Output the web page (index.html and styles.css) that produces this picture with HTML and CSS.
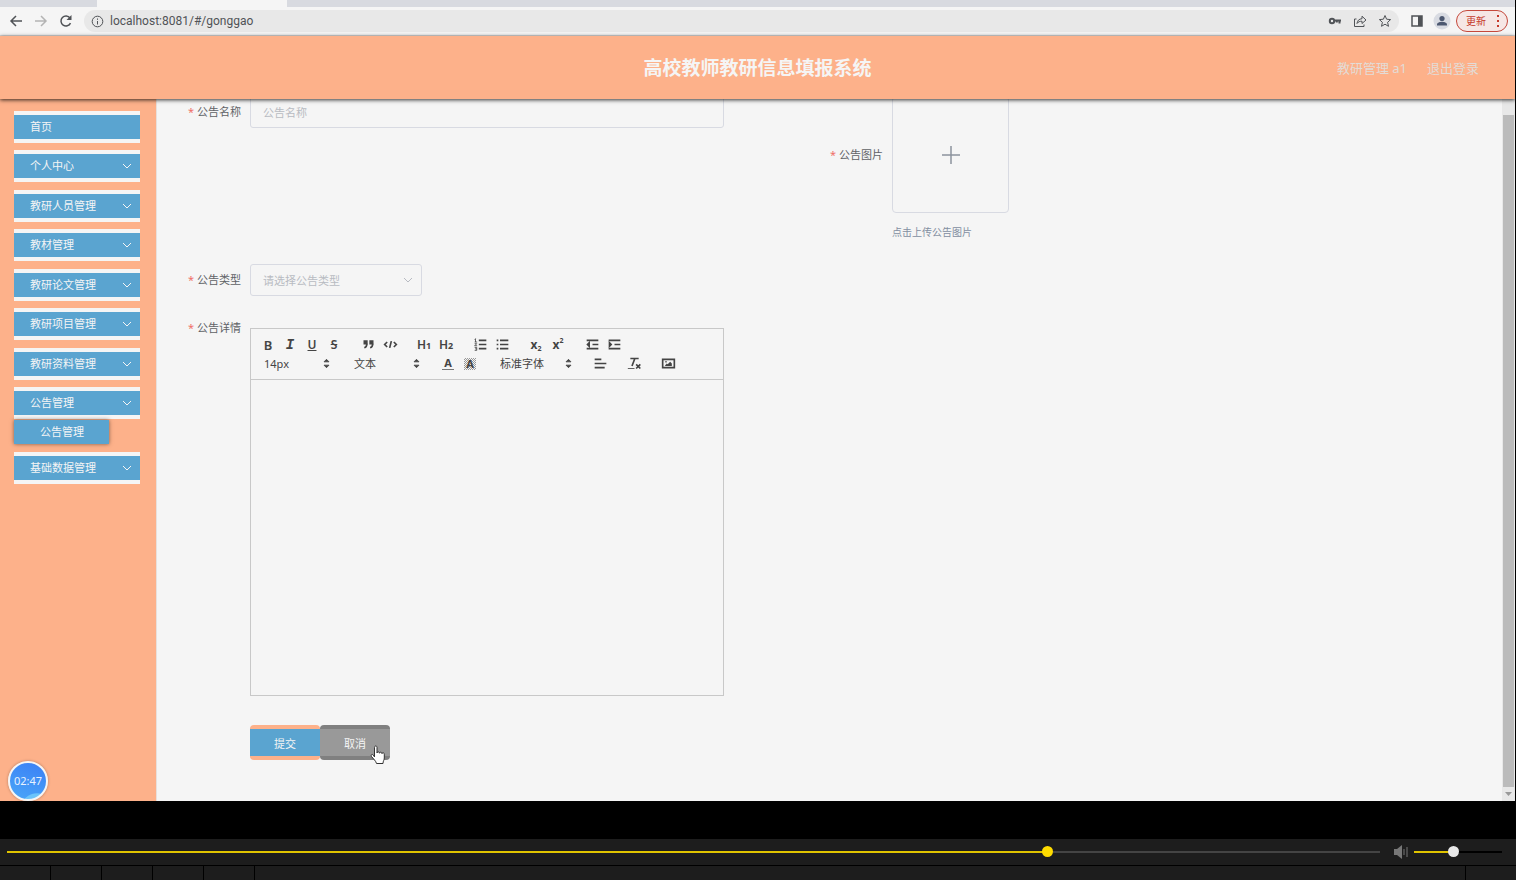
FILE: index.html
```html
<!DOCTYPE html>
<html lang="zh-CN">
<head>
    <meta charset="UTF-8">
    <meta name="viewport" content="width=device-width, initial-scale=1.0">
    <title>高校教师教研信息填报系统</title>
    <link rel="stylesheet" href="styles.css">
</head>
<body>
<div class="screen">
    <div class="tabs">
        <div class="tab"></div>
    </div>
    <div class="toolbar">
        <button class="tool" aria-label="后退"><svg width="14" height="14" viewBox="0 0 14 14"><path d="M13 7H2M7 2L2 7l5 5"/></svg></button>
        <button class="tool off" aria-label="前进"><svg width="14" height="14" viewBox="0 0 14 14"><path d="M1 7h11M7 2l5 5-5 5"/></svg></button>
        <button class="tool" aria-label="刷新"><svg width="14" height="14" viewBox="0 0 14 14"><path d="M11.5 9.2A5 5 0 1 1 11 4"/><path class="fill" d="M12.5 1v5h-5z"/></svg></button>
        <div class="address">
            <svg width="13" height="13" viewBox="0 0 13 13"><circle cx="6.5" cy="6.5" r="5.3"/><path d="M6.5 6v3.5M6.5 3.5v1.3"/></svg>
            <input type="text" class="url" value="localhost:8081/#/gonggao" aria-label="地址">
            <button class="tool" aria-label="密码"><svg width="14" height="14" viewBox="0 0 14 14"><circle class="thick" cx="4" cy="7" r="2.2"/><path class="thick" d="M6.5 6.5H13M11.5 6.5v3M8.8 6.5v2"/></svg></button>
            <button class="tool thin" aria-label="分享"><svg width="14" height="14" viewBox="0 0 14 14"><path d="M3.5 5H1.5v7.5h9.5V10.5"/><path d="M4 9.5c.4-3 2-4.6 5-4.8V2.2L13 6 9 9.5V7.2c-2.3 0-3.8.6-5 2.3z"/></svg></button>
            <button class="tool thin" aria-label="收藏"><svg width="14" height="14" viewBox="0 0 14 14"><path d="M7 1.5l1.6 3.7 4 .4-3 2.7.9 4L7 10.2l-3.5 2.1.9-4-3-2.7 4-.4z"/></svg></button>
        </div>
        <button class="tool" aria-label="侧边栏"><svg width="14" height="14" viewBox="0 0 14 14"><path d="M2 2h10v10H2z"/><path class="fill" d="M8 2h4v10H8z"/></svg></button>
        <button class="tool" aria-label="用户"><svg width="18" height="18" viewBox="0 0 18 18"><circle class="halo" cx="9" cy="9" r="8.5"/><circle class="person" cx="9" cy="6.5" r="2.6"/><path class="person" d="M4 13.5v-1c0-2 3.3-2.8 5-2.8s5 .8 5 2.8v1z"/></svg></button>
        <button class="update">更新<svg width="4" height="14" viewBox="0 0 4 14"><path d="M1 1h2v2H1zM1 6h2v2H1zM1 11h2v2H1z"/></svg></button>
    </div>

    <header class="header">
        <h1>高校教师教研信息填报系统</h1>
        <nav class="user">
            <a href="#">教研管理 a1</a>
            <a href="#">退出登录</a>
        </nav>
    </header>

    <div class="page">
        <aside class="side">
            <ul class="menu">
                <li><a href="#">首页</a></li>
                <li><a href="#">个人中心<svg width="10" height="6" viewBox="0 0 10 6"><path d="M1 1l4 4 4-4"/></svg></a></li>
                <li><a href="#">教研人员管理<svg width="10" height="6" viewBox="0 0 10 6"><path d="M1 1l4 4 4-4"/></svg></a></li>
                <li><a href="#">教材管理<svg width="10" height="6" viewBox="0 0 10 6"><path d="M1 1l4 4 4-4"/></svg></a></li>
                <li><a href="#">教研论文管理<svg width="10" height="6" viewBox="0 0 10 6"><path d="M1 1l4 4 4-4"/></svg></a></li>
                <li><a href="#">教研项目管理<svg width="10" height="6" viewBox="0 0 10 6"><path d="M1 1l4 4 4-4"/></svg></a></li>
                <li><a href="#">教研资料管理<svg width="10" height="6" viewBox="0 0 10 6"><path d="M1 1l4 4 4-4"/></svg></a></li>
                <li>
                    <a href="#">公告管理<svg width="10" height="6" viewBox="0 0 10 6"><path d="M1 1l4 4 4-4"/></svg></a>
                    <a href="#" class="sub">公告管理</a>
                </li>
                <li><a href="#">基础数据管理<svg width="10" height="6" viewBox="0 0 10 6"><path d="M1 1l4 4 4-4"/></svg></a></li>
            </ul>
            <div class="timer">02:47</div>
        </aside>

        <main class="main">
            <form class="form">
                <div class="row">
                    <div class="item">
                        <label for="name">公告名称</label>
                        <div class="field"><input type="text" id="name" class="wide" placeholder="公告名称"></div>
                    </div>
                    <div class="item">
                        <label for="photo" class="tall">公告图片</label>
                        <div class="field">
                            <button type="button" id="photo" class="upload"><svg width="20" height="20" viewBox="0 0 20 20"><path d="M10 1v18M1 10h18"/></svg></button>
                            <div class="tip">点击上传公告图片</div>
                        </div>
                    </div>
                </div>
                <div class="row">
                    <div class="item">
                        <label for="type">公告类型</label>
                        <div class="field type">
                            <select id="type"><option>请选择公告类型</option></select>
                            <svg width="10" height="6" viewBox="0 0 10 6"><path d="M1 1l4 4 4-4"/></svg>
                        </div>
                    </div>
                </div>
                <div class="row">
                    <div class="item">
                        <label for="text">公告详情</label>
                        <div class="field">
                            <div class="editor">
                                <div class="tools">
                                    <div class="line">
                                        <div class="group">
                                            <button type="button"><b>B</b></button>
                                            <button type="button"><i>I</i></button>
                                            <button type="button"><u>U</u></button>
                                            <button type="button"><s>S</s></button>
                                        </div>
                                        <div class="group">
                                            <button type="button" aria-label="引用"><svg viewBox="0 0 18 18"><path class="fill" d="M4 5h3v3H4zM11 5h3v3h-3z"/><path d="M7 8c0 4-3 5-3 5M14 8c0 4-3 5-3 5"/></svg></button>
                                            <button type="button" aria-label="代码"><svg viewBox="0 0 18 18"><path d="M5 6L2 9l3 3M13 6l3 3-3 3M10 5L8 13"/></svg></button>
                                        </div>
                                        <div class="group">
                                            <button type="button" class="head">H<small>1</small></button>
                                            <button type="button" class="head">H<small>2</small></button>
                                        </div>
                                        <div class="group">
                                            <button type="button" aria-label="有序列表"><svg viewBox="0 0 18 18"><path d="M7 4h9M7 9h9M7 14h9"/><path class="fine" d="M2 3l1-1v4M2 6h3M2 8h2.5L2 10.5h3M2 12.5h2.5v3.5H2M2.5 14.2h2"/></svg></button>
                                            <button type="button" aria-label="无序列表"><svg viewBox="0 0 18 18"><path d="M6 4h10M6 9h10M6 14h10M2 4h2M2 9h2M2 14h2"/></svg></button>
                                        </div>
                                        <div class="group">
                                            <button type="button" class="script">x<sub>2</sub></button>
                                            <button type="button" class="script">x<sup>2</sup></button>
                                        </div>
                                        <div class="group">
                                            <button type="button" aria-label="减少缩进"><svg viewBox="0 0 18 18"><path d="M2 14h14M2 4h14M9 9h7"/><path class="fill" d="M5 7v4L3 9z"/></svg></button>
                                            <button type="button" aria-label="增加缩进"><svg viewBox="0 0 18 18"><path d="M2 14h14M2 4h14M9 9h7"/><path class="fill" d="M3 7v4l2-2z"/></svg></button>
                                        </div>
                                    </div>
                                    <div class="line">
                                        <div class="group picker">
                                            <select aria-label="字号"><option>14px</option></select>
                                            <svg viewBox="0 0 18 18"><path class="fill" d="M6 7l3-3 3 3zM6 11l3 3 3-3z"/></svg>
                                        </div>
                                        <div class="group picker">
                                            <select aria-label="标题"><option>文本</option></select>
                                            <svg viewBox="0 0 18 18"><path class="fill" d="M6 7l3-3 3 3zM6 11l3 3 3-3z"/></svg>
                                        </div>
                                        <div class="group">
                                            <button type="button"><span class="color">A</span></button>
                                            <button type="button"><span class="back">A</span></button>
                                        </div>
                                        <div class="group picker font">
                                            <select aria-label="字体"><option>标准字体</option></select>
                                            <svg viewBox="0 0 18 18"><path class="fill" d="M6 7l3-3 3 3zM6 11l3 3 3-3z"/></svg>
                                        </div>
                                        <div class="group">
                                            <button type="button" aria-label="对齐"><svg viewBox="0 0 18 18"><path d="M2 9h14M2 14h12M2 4h8"/></svg></button>
                                        </div>
                                        <div class="group">
                                            <button type="button" aria-label="清除格式"><svg viewBox="0 0 18 18"><path d="M4 3h10M6 12l3.4-9M11 10l5 5M16 10l-5 5"/><path class="fine" d="M1 15h8"/></svg></button>
                                        </div>
                                        <div class="group">
                                            <button type="button" aria-label="图片"><svg viewBox="0 0 18 18"><path d="M2 4h14v10H2z"/><circle class="dot" cx="6" cy="7" r="1"/><path class="dot" d="M5 12v-1l2-2 1 1 3-3 2 2v3z"/></svg></button>
                                        </div>
                                    </div>
                                </div>
                                <textarea id="text"></textarea>
                            </div>
                        </div>
                    </div>
                </div>
                <div class="buttons">
                    <button type="button" class="submit">提交</button>
                    <button type="button" class="cancel">取消</button>
                    <svg class="hand" width="16" height="20" viewBox="0 0 16 20"><path d="M4.5 12V2.5c0-2 2.5-2 2.5 0V8c0-1.5 2.5-1.5 2.5.2 0-1.4 2.5-1.3 2.5.4 0-1.3 2.3-1.2 2.3.6V13c0 2-1.3 3-1.3 5.5H6.5C6 16 3 13.5 1.5 11.5c-1-1.6.6-2.7 1.8-1.5z"/></svg>
                </div>
            </form>
        </main>
        <div class="scroll">
            <div class="thumb"></div>
            <svg width="7" height="4" viewBox="0 0 7 4"><path d="M0 0h7L3.5 4z"/></svg>
        </div>
    </div>

    <div class="player">
        <input type="range" class="seek" min="0" max="100" value="76" style="--pos: 76%" aria-label="进度">
        <svg width="16" height="14" viewBox="0 0 16 14"><path class="horn" d="M1 4h3l5-4v14l-5-4H1z"/><path d="M11 4v6M14 2v10"/></svg>
        <input type="range" class="volume" min="0" max="100" value="44" style="--pos: 44%" aria-label="音量">
    </div>
    <div class="cells">
        <div></div>
        <div></div>
        <div></div>
        <div></div>
        <div></div>
        <div class="rest"></div>
        <div></div>
    </div>
</div>
</body>
</html>
```
FILE: styles.css
```css
*{
    box-sizing: border-box;
}
body{
    margin: 0;
    background: #000;
    color: #606266;
    font-family: "Noto Sans", "Noto Sans CJK SC", sans-serif;
    font-size: 11px;
}
button, input, select, textarea{
    margin: 0;
    padding: 0;
    border: none;
    outline: none;
    background: none;
    color: inherit;
    font: inherit;
}
select{
    appearance: none;
}
svg{
    flex: none;
    fill: none;
    stroke: currentColor;
}
a{
    color: inherit;
    text-decoration: none;
}
.screen{
    display: flex;
    flex-direction: column;
    height: 100vh;
    overflow: hidden;
}

/* browser bar */
.tabs{
    flex: none;
    height: 7px;
    padding-left: 97px;
    margin-right: 1px;
    background: #d8dae0;
}
.tab{
    width: 190px;
    height: 7px;
    background: #f5f5f5;
}
.toolbar{
    flex: none;
    display: flex;
    align-items: center;
    height: 29px;
    padding: 0 7px 0 3px;
    margin-right: 1px;
    background: #f5f5f5;
    border-bottom: 1px solid #ddd;
    color: #505357;
}
.tool{
    display: flex;
    align-items: center;
    justify-content: center;
    width: 25px;
    height: 22px;
}
.tool svg{
    stroke-width: 1.5;
}
.thin svg{
    stroke-width: 1;
}
.off{
    color: #b4b4b4;
}
.tool .fill{
    fill: currentColor;
    stroke: none;
}
.tool .thick{
    stroke-width: 2;
}
.tool .halo{
    fill: #d8dbe2;
    stroke: none;
}
.tool .person{
    fill: #4c5870;
    stroke: none;
}
.address{
    flex: 1;
    display: flex;
    align-items: center;
    height: 22px;
    margin: 0 5px 0 6px;
    padding: 0 2px 0 7px;
    background: #e8e8e8;
    border-radius: 11px;
}
.url{
    flex: 1;
    margin-left: 6px;
    font-family: Roboto, sans-serif;
    font-size: 12px;
    line-height: 20px;
}
.update{
    display: flex;
    align-items: center;
    justify-content: space-between;
    width: 52px;
    height: 22px;
    margin-left: 2px;
    padding: 0 7px 0 9px;
    border: 1px solid #c5493c;
    border-radius: 11px;
    background: #f6e7e5;
    color: #c5392b;
    font-size: 10px;
    line-height: 18px;
}
.update svg{
    fill: currentColor;
    stroke: none;
}

.header{
    flex: none;
    position: relative;
    z-index: 2;
    display: grid;
    grid-template-columns: 1fr auto 1fr;
    align-items: center;
    height: 63px;
    margin-right: 1px;
    padding: 0 36px;
    background: #fdb18a;
    box-shadow: 0 1px 4px rgba(0, 0, 0, 0.8);
}
.header h1{
    grid-column: 2;
    margin: 0;
    color: #f5f5f5;
    font-size: 19px;
    line-height: 28px;
}
.user{
    display: flex;
    justify-content: flex-end;
    gap: 20px;
    color: #e3dcd7;
    font-size: 13px;
    line-height: 16px;
}

.page{
    flex: 1;
    display: flex;
    min-height: 0;
    margin-right: 1px;
    background: #f5f5f5;
}

/* left menu */
.side{
    position: relative;
    flex: none;
    width: 157px;
    padding: 12px 16px 0 14px;
    background: #fdb18a;
    border-right: 1px solid #e8e0dc;
    overflow: hidden;
}
.menu{
    margin: 0;
    padding: 0;
    list-style: none;
}
.menu li{
    margin-bottom: 8px;
}
.menu li:nth-child(odd){
    margin-bottom: 7px;
}
.menu a{
    display: flex;
    align-items: center;
    justify-content: space-between;
    height: 32px;
    padding: 0 8px 0 16px;
    border: solid #f5f5f5;
    border-width: 4px 0;
    background: #5aa4d0;
    color: #f5f5f5;
    line-height: 24px;
}
.menu .sub{
    width: 95px;
    height: 24px;
    margin-top: 1px;
    padding: 0 0 0 26px;
    border: none;
    box-shadow: 0 0 4px rgba(0, 0, 0, 0.5);
}
.timer{
    position: absolute;
    left: 8px;
    bottom: 0;
    width: 40px;
    height: 40px;
    border: 2px solid #f5f5f5;
    border-radius: 50%;
    background: radial-gradient(circle at 75% 130%, #6cc4fa 16px, transparent 17px), linear-gradient(200deg, #3a7ff5, #4aa6f8);
    box-shadow: 0 0 3px rgba(0, 0, 0, 0.3);
    color: #e8f2ff;
    line-height: 36px;
    text-align: center;
}

/* form */
.main{
    flex: 1;
    min-width: 0;
    padding: 0 36px 0 25px;
    overflow: hidden;
}
.form{
    margin-top: -3px;
}
.row{
    display: grid;
    grid-template-columns: 1fr 1fr;
    margin-bottom: 16px;
}
.item{
    display: flex;
}
.item label{
    flex: none;
    width: 68px;
    padding-right: 9px;
    line-height: 32px;
    text-align: right;
}
.item label:before{
    content: "*";
    margin-right: 3px;
    color: #f07068;
}
.item .tall{
    line-height: 117px;
}
.field{
    flex: 1;
}
.wide{
    display: block;
    width: calc(100% - 100px);
    height: 32px;
    padding: 0 12px;
    border: 1px solid #d8dae2;
    border-radius: 3px;
}
.wide::placeholder{
    color: #b8bbc2;
}
.upload{
    display: flex;
    align-items: center;
    justify-content: center;
    width: 117px;
    height: 117px;
    border: 1px solid #d8dae2;
    border-radius: 4px;
    color: #8c939d;
}
.upload svg{
    stroke-width: 1.5;
}
.tip{
    margin-top: 3px;
    color: #838fa1;
    font-size: 10px;
    line-height: 32px;
}
.type{
    display: flex;
    align-items: center;
    color: #b8bbc2;
}
.type select{
    width: 172px;
    height: 32px;
    padding: 0 12px;
    border: 1px solid #d8dae2;
    border-radius: 3px;
}
.type svg{
    margin-left: -19px;
    pointer-events: none;
}

/* editor */
.editor{
    width: calc(100% - 100px);
    height: 368px;
    margin-top: 16px;
    display: flex;
    flex-direction: column;
    border: 1px solid #c8c8c8;
}
.tools{
    padding: 6px;
    border-bottom: 1px solid #c8c8c8;
    color: #444;
}
.line{
    display: flex;
    height: 19px;
}
.group{
    display: flex;
    align-items: center;
    margin-right: 12px;
}
.group button{
    display: flex;
    align-items: center;
    justify-content: center;
    width: 22px;
    height: 19px;
    font-size: 12px;
    line-height: 12px;
    font-weight: 600;
}
.group svg{
    width: 15px;
    height: 15px;
    stroke-width: 2;
}
.group .fill{
    fill: currentColor;
}
.group .fine{
    stroke-width: 1;
}
.group .dot{
    fill: currentColor;
    stroke: none;
}
.group b{
    font-size: 13px;
    font-weight: 600;
}
.group i{
    font-family: "Liberation Mono", monospace;
    font-size: 14px;
    font-weight: bold;
}
.group .head{
    align-items: baseline;
    line-height: 19px;
}
.group small{
    font-size: 9px;
    font-weight: bold;
}
.group .script{
    font-weight: bold;
}
.group sub, .group sup{
    font-size: 7px;
    line-height: 7px;
}
.group sub{
    align-self: flex-end;
    padding-bottom: 2px;
}
.group sup{
    align-self: flex-start;
    padding-top: 2px;
}
.color, .back{
    width: 12px;
    height: 12px;
    font-size: 11px;
    font-weight: bold;
    line-height: 10px;
    text-align: center;
}
.color{
    border-bottom: 1px solid #777;
}
.back{
    line-height: 12px;
    background: repeating-conic-gradient(#999 0 25%, #f5f5f5 0 50%) 0 0 / 2px 2px;
}
.picker select{
    width: 78px;
    padding-left: 7px;
}
.picker svg{
    margin-left: -16px;
    margin-right: 1px;
    pointer-events: none;
    stroke-width: 1;
}
.font select{
    width: 84px;
}
.editor textarea{
    flex: 1;
    padding: 12px;
    resize: none;
}

.buttons{
    position: relative;
    display: flex;
    margin: 29px 0 0 68px;
}
.buttons button{
    width: 70px;
    height: 35px;
    border: solid #fdb18a;
    border-width: 4px 0;
    border-radius: 4px;
    background: #5aa4d0;
    color: #f5f5f5;
}
.buttons .cancel{
    background: #999;
    border-color: #808080;
}
.hand{
    position: absolute;
    left: 120px;
    top: 20px;
    fill: #fff;
    stroke: #333;
}

.scroll{
    display: flex;
    flex-direction: column;
    align-items: center;
    width: 13px;
    padding: 16px 1px 5px;
    background: #e8e8e8;
}
.thumb{
    flex: 1;
    width: 11px;
    margin-bottom: 5px;
    background: #bbb;
}
.scroll svg{
    fill: #999;
    stroke: none;
}

/* video player */
.player{
    flex: none;
    display: flex;
    align-items: center;
    height: 26px;
    margin-top: 38px;
    padding: 0 14px 1px 7px;
    background: #1d1d1d;
    color: #777;
}
.player .horn{
    fill: currentColor;
    stroke: none;
}
.player input{
    appearance: none;
    height: 11px;
    background: linear-gradient(to right, #e0c400 var(--pos), var(--track) var(--pos)) center / 100% 2px no-repeat;
}
.player .seek{
    --track: #444;
    flex: 1;
    margin-right: 13px;
    color: #ffdc00;
}
.player .volume{
    --track: #000;
    width: 88px;
    margin-left: 5px;
    color: #e8e8e8;
}
.player input::-webkit-slider-thumb{
    appearance: none;
    width: 11px;
    height: 11px;
    border-radius: 50%;
    background: currentColor;
}
.cells{
    flex: none;
    display: flex;
    gap: 1px;
    height: 15px;
    padding-top: 1px;
}
.cells div{
    width: 50px;
    background: #1d1d1d;
}
.cells .rest{
    flex: 1;
}
```
